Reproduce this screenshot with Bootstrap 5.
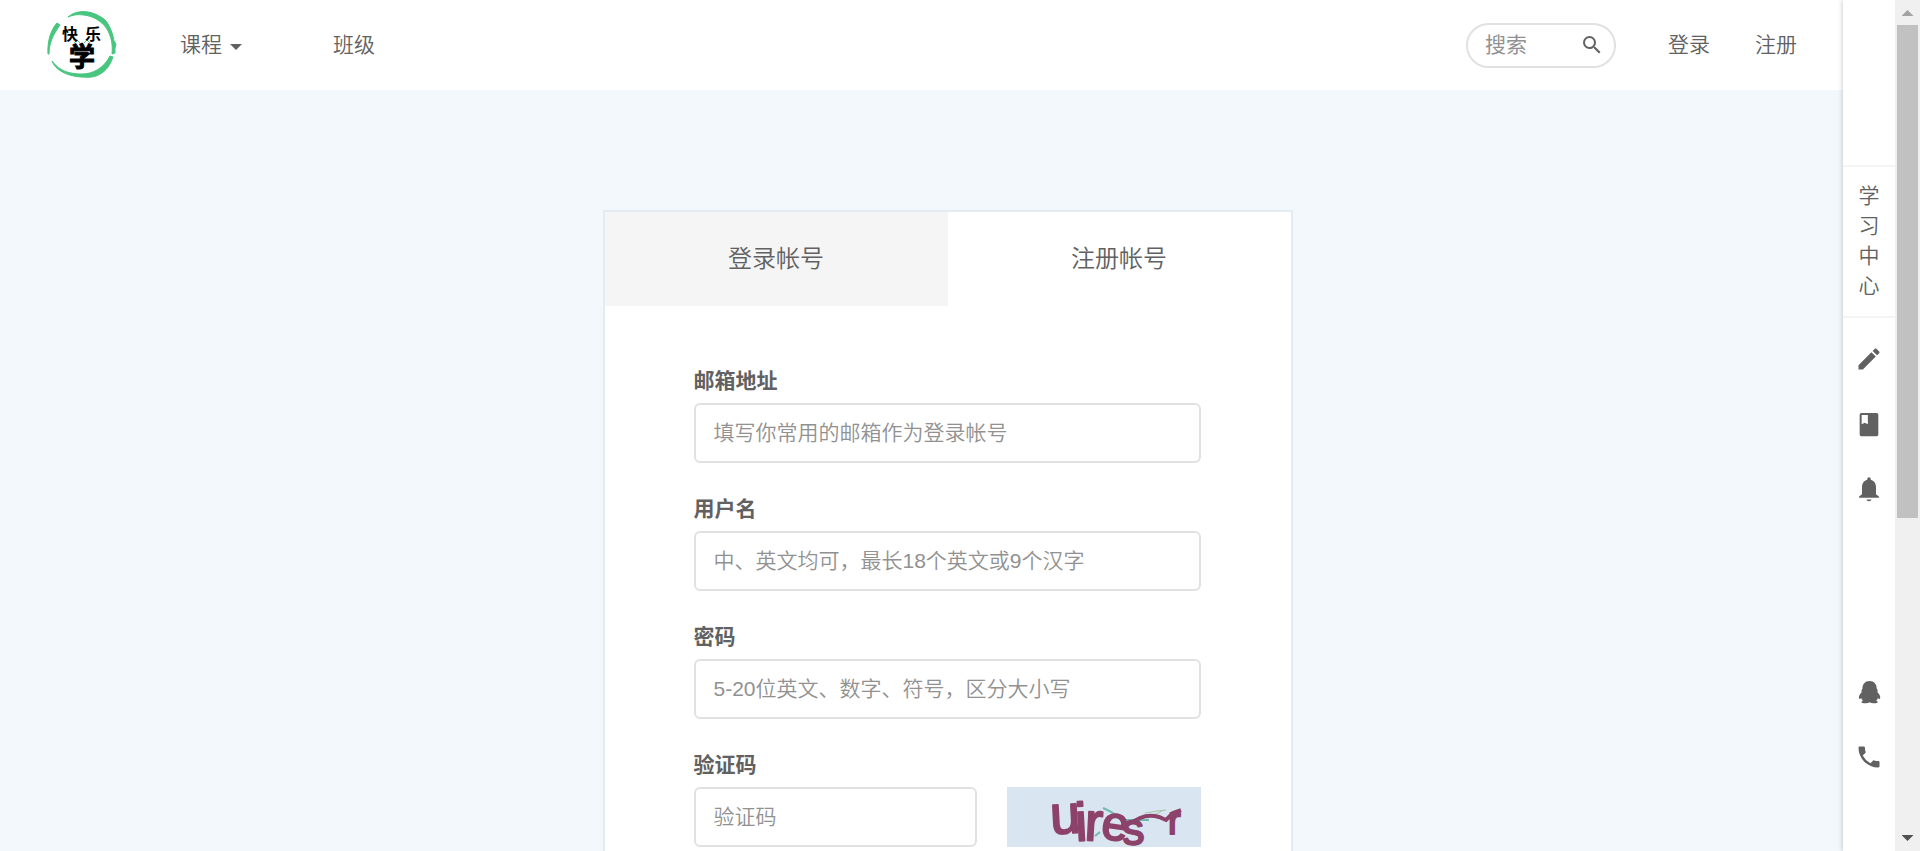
<!DOCTYPE html>
<html lang="zh-CN">
<head>
<meta charset="utf-8">
<meta name="viewport" content="width=device-width, initial-scale=1">
<title>注册帐号</title>
<link href="https://cdn.jsdelivr.net/npm/bootstrap@5.3.0/dist/css/bootstrap.min.css" rel="stylesheet">
<style>
body { font-family: "Liberation Sans", "Noto Sans CJK SC", sans-serif; font-size: 21px; line-height: 30px; color: #616161; font-weight: 350; }
a { color: inherit; text-decoration: none; }
.page-area { background: #f3f8fc; }
.site-nav { height: 90px; padding: 0 98px 0 46px; }
.menu-links { gap: 91px; margin-left: 60px; }
.caret-down { width: 12px; height: 6px; background: #616161; clip-path: polygon(0 0, 100% 0, 50% 100%); }
.user-links { gap: 45px; margin-left: 52px; }
.search-box { width: 150px; height: 45px; border: 2px solid #e1e1e1; border-radius: 23px; padding: 0 10px 0 17px; }
.search-box input { min-width: 0; flex: 1; border: 0; outline: 0; padding: 0; background: none; color: inherit; }
::placeholder, .form-control::placeholder { color: #919191; opacity: 1; }
.plain-btn { border: 0; background: none; padding: 0; color: #616161; display: flex; align-items: center; justify-content: center; }
.auth-card { max-width: 690px; margin: 120px auto 0; border: 2px solid #e4ecf3; background: #fff; }
.auth-tabs a { flex: 1; height: 94px; font-size: 24px; }
.auth-tabs .tab-off { background: #f5f5f5; }
.auth-form { padding: 60px 90px 90px 89px; }
.field { margin-bottom: 31px; }
.form-label { display: block; font-weight: 700; margin-bottom: 7px; }
.form-control { height: 60px; border: 2px solid #e1e1e1; border-radius: 6px; padding: 0 18px; font-size: 21px; font-weight: 350; color: #616161; }
.captcha-row { gap: 30px; }
.captcha-pic { width: 194px; height: 60px; background: #d9e5f1; flex: none; }
.tool-bar { width: 52px; background: #fff; box-shadow: 0 0 5px rgba(0,0,0,.25); }
.study-link { margin-top: 165px; padding: 14px 15px 15px; border: solid #f4f4f4; border-width: 2px 0; text-align: center; width: 100%; line-height: 30px; }
.tools-top { padding-top: 8px; }
.tools-end { padding-bottom: 62px; }
.tool-bar .plain-btn { width: 52px; height: 65px; }
.scroll-rail { width: 25px; background: #f0f0f0; padding: 10px 0; }
.scroll-thumb { width: 21px; height: 493px; background: #c1c1c1; margin-top: 9px; }
.arrow-up { width: 12px; height: 6px; background: #a3a3a3; clip-path: polygon(50% 0, 100% 100%, 0 100%); }
.arrow-end { width: 12px; height: 6px; background: #505050; clip-path: polygon(0 0, 100% 0, 50% 100%); }
</style>
</head>
<body>
<div class="d-flex vh-100 overflow-hidden">
  <div class="page-area flex-grow-1 position-relative overflow-hidden">
    <header class="site-nav bg-white d-flex align-items-center">
      <a href="#" aria-label="快乐学">
        <svg class="d-block" width="74" height="74" viewBox="0 0 74 74">
          <g fill="#46c67e" stroke="#46c67e" stroke-linejoin="round">
            <path d="M22 9C31 1 45 3 53 8c4 2 7 4 9 8 3 5 5 11 6 17l2 3-1 4v5l-3 1c1-10-1-18-5-25C55 12 46 8 38 7 31 6 27 7 22 9z"/>
            <path d="M14 17l-3-2C6 20 1 32 2 46l1 0c0-11 4-19 11-29z"/>
            <path d="M6 53c8 11 19 13 30 13 11 0 22-6 28-18l3 1c-4 11-9 16-17 19-6 2-10 1-15 1C21 68 9 62 6 53z"/>
          </g>
          <path d="M28 35l3-3 3 3M38 35l3-3 3 3" fill="none" stroke="#46c67e"/>
          <g fill="#000" font-family="Noto Sans CJK SC, sans-serif">
            <text x="16" y="32" font-size="16" font-weight="700">快</text>
            <text x="39" y="32" font-size="16" font-weight="700">乐</text>
            <text x="23" y="58" font-size="26" font-weight="700" stroke="#000">学</text>
          </g>
        </svg>
      </a>
      <nav class="menu-links d-flex align-items-center">
        <a href="#" class="d-flex align-items-center">课程<span class="caret-down ms-2 mt-1"></span></a>
        <a href="#">班级</a>
      </nav>
      <form class="search-box d-flex align-items-center ms-auto">
        <input type="text" placeholder="搜索" aria-label="搜索">
        <button type="button" class="plain-btn" aria-label="搜索">
          <svg width="24" height="24" viewBox="0 0 24 24" fill="currentColor"><path d="M15.5 14h-.79l-.28-.27A6.47 6.47 0 0 0 16 9.5 6.5 6.5 0 1 0 9.5 16c1.61 0 3.09-.59 4.23-1.57l.27.28v.79l5 4.99L20.49 19l-4.99-5zm-6 0a4.5 4.5 0 1 1 0-9 4.5 4.5 0 0 1 0 9z"/></svg>
        </button>
      </form>
      <div class="user-links d-flex">
        <a href="#">登录</a>
        <a href="#">注册</a>
      </div>
    </header>

    <main class="auth-card">
      <div class="auth-tabs d-flex">
        <a href="#" class="tab-off d-flex align-items-center justify-content-center">登录帐号</a>
        <a href="#" class="d-flex align-items-center justify-content-center">注册帐号</a>
      </div>
      <form class="auth-form">
        <div class="field">
          <label class="form-label" for="email">邮箱地址</label>
          <input class="form-control" id="email" type="email" placeholder="填写你常用的邮箱作为登录帐号">
        </div>
        <div class="field">
          <label class="form-label" for="user">用户名</label>
          <input class="form-control" id="user" type="text" placeholder="中、英文均可，最长18个英文或9个汉字">
        </div>
        <div class="field">
          <label class="form-label" for="pass">密码</label>
          <input class="form-control" id="pass" type="password" placeholder="5-20位英文、数字、符号，区分大小写">
        </div>
        <div class="field">
          <label class="form-label" for="code">验证码</label>
          <div class="captcha-row d-flex">
            <input class="form-control" id="code" type="text" placeholder="验证码">
            <svg class="captcha-pic" viewBox="0 0 194 60" role="img" aria-label="验证码">
              <path d="M88 49l5-4M96 21q12 5 18 12h28" fill="none" stroke="#72b9b0" stroke-width="2"/>
              <path d="M138 26q10-2 21-3M145 29l12-6" fill="none" stroke="#a4c5ac" stroke-width="1"/>
              <g fill="#8c4269" stroke="#8c4269" stroke-linejoin="round" font-family="Liberation Sans, sans-serif" font-weight="400" stroke-width="2">
                <text font-size="54" transform="translate(44 47) rotate(-3)">u</text>
                <text font-size="54" transform="translate(69 54) rotate(-3)">i</text>
                <text font-size="54" transform="translate(77 53) rotate(3)">r</text>
                <text font-size="48" transform="translate(93 51) rotate(8)">e</text>
                <text font-size="44" transform="translate(116 58) rotate(-4)">s</text>
                <text font-size="38" transform="translate(161 47)">r</text>
              </g>
              <path d="M116 40q9-5 17-9 9-4 19-1l7 3 7-7 8-3" fill="none" stroke="#8c4269" stroke-width="4"/>
            </svg>
          </div>
        </div>
      </form>
    </main>

    <aside class="tool-bar position-absolute top-0 end-0 h-100 d-flex flex-column">
      <a href="#" class="study-link">学习中心</a>
      <div class="tools-top">
        <button type="button" class="plain-btn" aria-label="笔记"><svg width="28" height="28" viewBox="0 0 24 24" fill="currentColor"><path d="M3 17.25V21h3.75L17.81 9.94l-3.75-3.75L3 17.25zM20.71 7.04a1 1 0 0 0 0-1.41l-2.34-2.34a1 1 0 0 0-1.41 0l-1.83 1.83 3.75 3.75 1.83-1.83z"/></svg></button>
        <button type="button" class="plain-btn" aria-label="课程"><svg width="28" height="28" viewBox="0 0 24 24" fill="currentColor"><path fill-rule="evenodd" d="M18.500 2.500h-13A1.500 1.500 0 0 0 4 4v17a1.500 1.500 0 0 0 1.500 1.500h13A1.500 1.500 0 0 0 20 21V4a1.500 1.500 0 0 0-1.500-1.500zM5.700 4.200H11v8l-2.600-1.300-2.700 1.300v-8z"/></svg></button>
        <button type="button" class="plain-btn" aria-label="通知"><svg width="28" height="28" viewBox="0 0 24 24" fill="currentColor"><path d="M12 22.500a2.200 1.800 0 0 0 2.200-1.500H9.800A2.200 1.800 0 0 0 12 22.500zM18 16.500v-6c0-3.300-1.700-5.700-4.500-6.400V3.500a1.500 1.500 0 0 0-3 0v.6C7.700 4.800 6 7.200 6 10.500v6L3.500 18.500v1h17v-1z"/></svg></button>
      </div>
      <div class="tools-end mt-auto">
        <button type="button" class="plain-btn" aria-label="QQ 客服"><svg width="28" height="28" viewBox="0 0 24 24" fill="currentColor"><path d="M12.500 2.500C8.600 2.500 6.400 5.200 6.400 9L5.600 10.500l.1 1.800C4 14 3.200 15.600 3.400 17.200c.1 1.100.9 1 1.900-.1.300.9.800 1.700 1.500 2.300-1 .4-1.500 1-1.200 1.600.5.900 5.400.8 6.900-.2 1.500 1 6.400 1.100 6.900.2.300-.6-.2-1.200-1.200-1.600.7-.6 1.200-1.400 1.500-2.300 1 1.100 1.800 1.200 1.900.1.200-1.600-.6-3.200-2.300-4.900l.1-1.800-.8-1.500C18.600 5.200 16.400 2.500 12.500 2.500z"/></svg></button>
        <button type="button" class="plain-btn" aria-label="电话"><svg width="28" height="28" viewBox="0 0 24 24" fill="currentColor"><path d="M6.620 10.790a15.150 15.150 0 0 0 6.590 6.590l2.200-2.200c.27-.27.67-.36 1.020-.24 1.120.37 2.330.57 3.570.57.55 0 1 .45 1 1V20c0 .55-.45 1-1 1A17 17 0 0 1 3 4c0-.55.45-1 1-1h3.500c.55 0 1 .45 1 1 0 1.250.2 2.450.57 3.570.11.35.03.74-.25 1.020l-2.200 2.200z"/></svg></button>
      </div>
    </aside>
  </div>
  <div class="scroll-rail flex-shrink-0 d-flex flex-column align-items-center" aria-hidden="true">
    <div class="arrow-up"></div>
    <div class="scroll-thumb"></div>
    <div class="arrow-end mt-auto"></div>
  </div>
</div>
<script src="https://cdn.jsdelivr.net/npm/bootstrap@5.3.0/dist/js/bootstrap.bundle.min.js"></script>
</body>
</html>
